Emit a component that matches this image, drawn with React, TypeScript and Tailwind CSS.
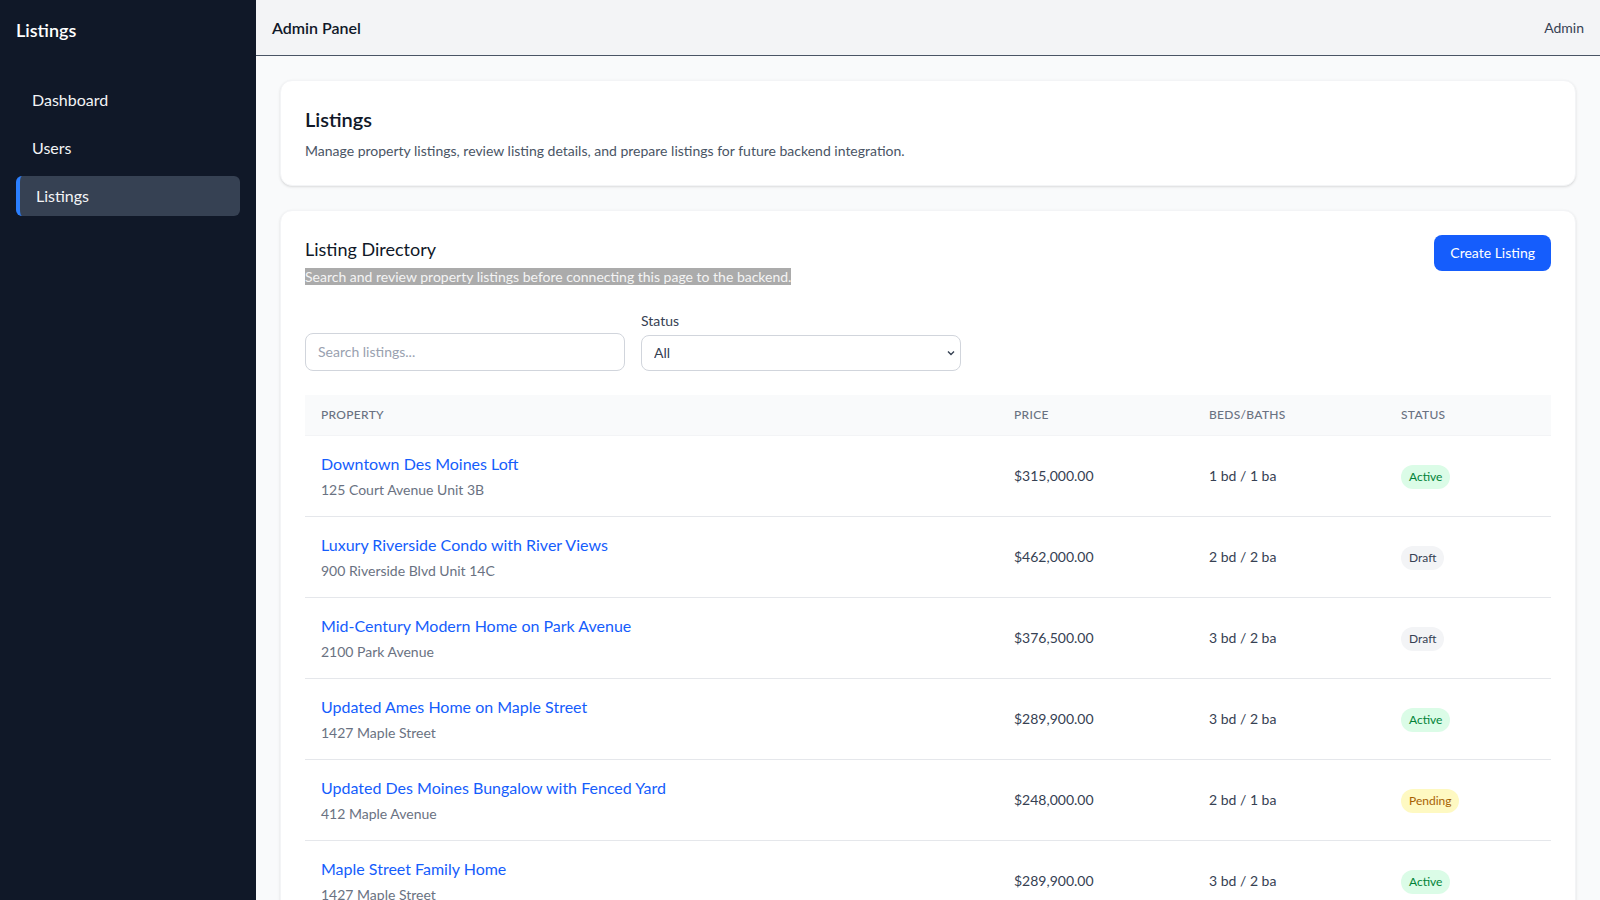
type Listing = {
  id: number;
  title: string;
  address: string;
  price: string;
  rooms: string;
  status: "Active" | "Draft" | "Pending";
};

const listings: Listing[] = [
  { id: 1, title: "Downtown Des Moines Loft", address: "125 Court Avenue Unit 3B", price: "$315,000.00", rooms: "1 bd / 1 ba", status: "Active" },
  { id: 2, title: "Luxury Riverside Condo with River Views", address: "900 Riverside Blvd Unit 14C", price: "$462,000.00", rooms: "2 bd / 2 ba", status: "Draft" },
  { id: 3, title: "Mid-Century Modern Home on Park Avenue", address: "2100 Park Avenue", price: "$376,500.00", rooms: "3 bd / 2 ba", status: "Draft" },
  { id: 4, title: "Updated Ames Home on Maple Street", address: "1427 Maple Street", price: "$289,900.00", rooms: "3 bd / 2 ba", status: "Active" },
  { id: 5, title: "Updated Des Moines Bungalow with Fenced Yard", address: "412 Maple Avenue", price: "$248,000.00", rooms: "2 bd / 1 ba", status: "Pending" },
  { id: 6, title: "Maple Street Family Home", address: "1427 Maple Street", price: "$289,900.00", rooms: "3 bd / 2 ba", status: "Active" },
];

const badgeStyles: Record<Listing["status"], string> = {
  Active: "bg-green-100 text-green-700",
  Draft: "bg-gray-100 text-gray-700",
  Pending: "bg-yellow-100 text-yellow-700",
};

export default function App() {
  return (
    <div className="flex h-screen overflow-hidden bg-gray-50 font-['Lato',sans-serif] text-gray-900">
      <aside className="w-64 shrink-0 bg-gray-900 p-4 text-white">
        <div className="text-lg font-semibold">Listings</div>
        <nav className="mt-9 flex flex-col gap-2">
          <a className="rounded-md px-4 py-2 text-gray-100">Dashboard</a>
          <a className="rounded-md px-4 py-2 text-gray-100">Users</a>
          <a className="rounded-md border-l-4 border-blue-500 bg-gray-700 px-4 py-2 text-gray-100">Listings</a>
        </nav>
      </aside>

      <div className="flex min-w-0 flex-1 flex-col">
        <header className="flex h-14 shrink-0 items-center justify-between border-b border-gray-600 bg-gray-100 px-4">
          <span className="font-semibold text-gray-900">Admin Panel</span>
          <span className="text-sm text-gray-700">Admin</span>
        </header>

        <main className="flex-1 space-y-6 overflow-hidden p-6">
          <section className="rounded-xl border border-gray-100 bg-white p-6 shadow-sm">
            <h1 className="text-xl font-semibold text-gray-900">Listings</h1>
            <p className="mt-2 text-sm text-gray-600">
              Manage property listings, review listing details, and prepare listings for future backend integration.
            </p>
          </section>

          <section className="rounded-xl border border-gray-100 bg-white p-6 shadow-sm">
            <div className="flex items-start justify-between gap-4">
              <div>
                <h2 className="text-lg text-gray-900">Listing Directory</h2>
                <p className="mt-1 text-sm">
                  <span className="bg-[#ababab] text-[#f4f4f4]">
                    Search and review property listings before connecting this page to the backend.
                  </span>
                </p>
              </div>
              <button className="rounded-lg bg-blue-600 px-4 py-2 text-sm text-white">Create Listing</button>
            </div>

            <div className="mt-6 flex items-end gap-4">
              <input
                className="w-80 rounded-lg border border-gray-300 bg-white px-3 py-2 text-sm text-gray-900 placeholder:text-gray-400"
                placeholder="Search listings..."
              />
              <div className="w-80">
                <label className="mb-1 block text-sm text-gray-700">Status</label>
                <div className="relative">
                  <select
                    className="h-9 w-full appearance-none rounded-lg border border-gray-300 bg-white px-3 text-sm text-gray-700"
                    defaultValue="all"
                  >
                    <option value="all">All</option>
                    <option value="active">Active</option>
                    <option value="draft">Draft</option>
                    <option value="pending">Pending</option>
                  </select>
                  <svg
                    className="pointer-events-none absolute right-[6px] top-1/2 h-2 w-2 -translate-y-1/2 text-gray-700"
                    viewBox="0 0 8 8"
                    fill="none"
                    stroke="currentColor"
                    strokeWidth="1.4"
                  >
                    <path d="M1 2.5l3 3 3-3" />
                  </svg>
                </div>
              </div>
            </div>

            <table className="mt-6 w-full table-fixed text-left">
              <thead className="bg-gray-50">
                <tr className="border-b border-gray-100">
                  <th className="w-[693px] px-4 py-3 text-xs font-medium uppercase tracking-wide text-gray-500">Property</th>
                  <th className="w-[195px] px-4 py-3 text-xs font-medium uppercase tracking-wide text-gray-500">Price</th>
                  <th className="w-[192px] px-4 py-3 text-xs font-medium uppercase tracking-wide text-gray-500">Beds/Baths</th>
                  <th className="px-4 py-3 text-xs font-medium uppercase tracking-wide text-gray-500">Status</th>
                </tr>
              </thead>
              <tbody className="divide-y divide-gray-200">
                {listings.map((listing) => (
                  <tr key={listing.id}>
                    <td className="px-4 py-4">
                      <div className="text-blue-600">{listing.title}</div>
                      <div className="mt-1 text-sm text-gray-500">{listing.address}</div>
                    </td>
                    <td className="px-4 py-4 text-sm text-gray-700">{listing.price}</td>
                    <td className="px-4 py-4 text-sm text-gray-700">{listing.rooms}</td>
                    <td className="px-4 py-4">
                      <span className={`inline-flex rounded-full px-2 py-1 text-xs ${badgeStyles[listing.status]}`}>
                        {listing.status}
                      </span>
                    </td>
                  </tr>
                ))}
              </tbody>
            </table>
          </section>
        </main>
      </div>
    </div>
  );
}
